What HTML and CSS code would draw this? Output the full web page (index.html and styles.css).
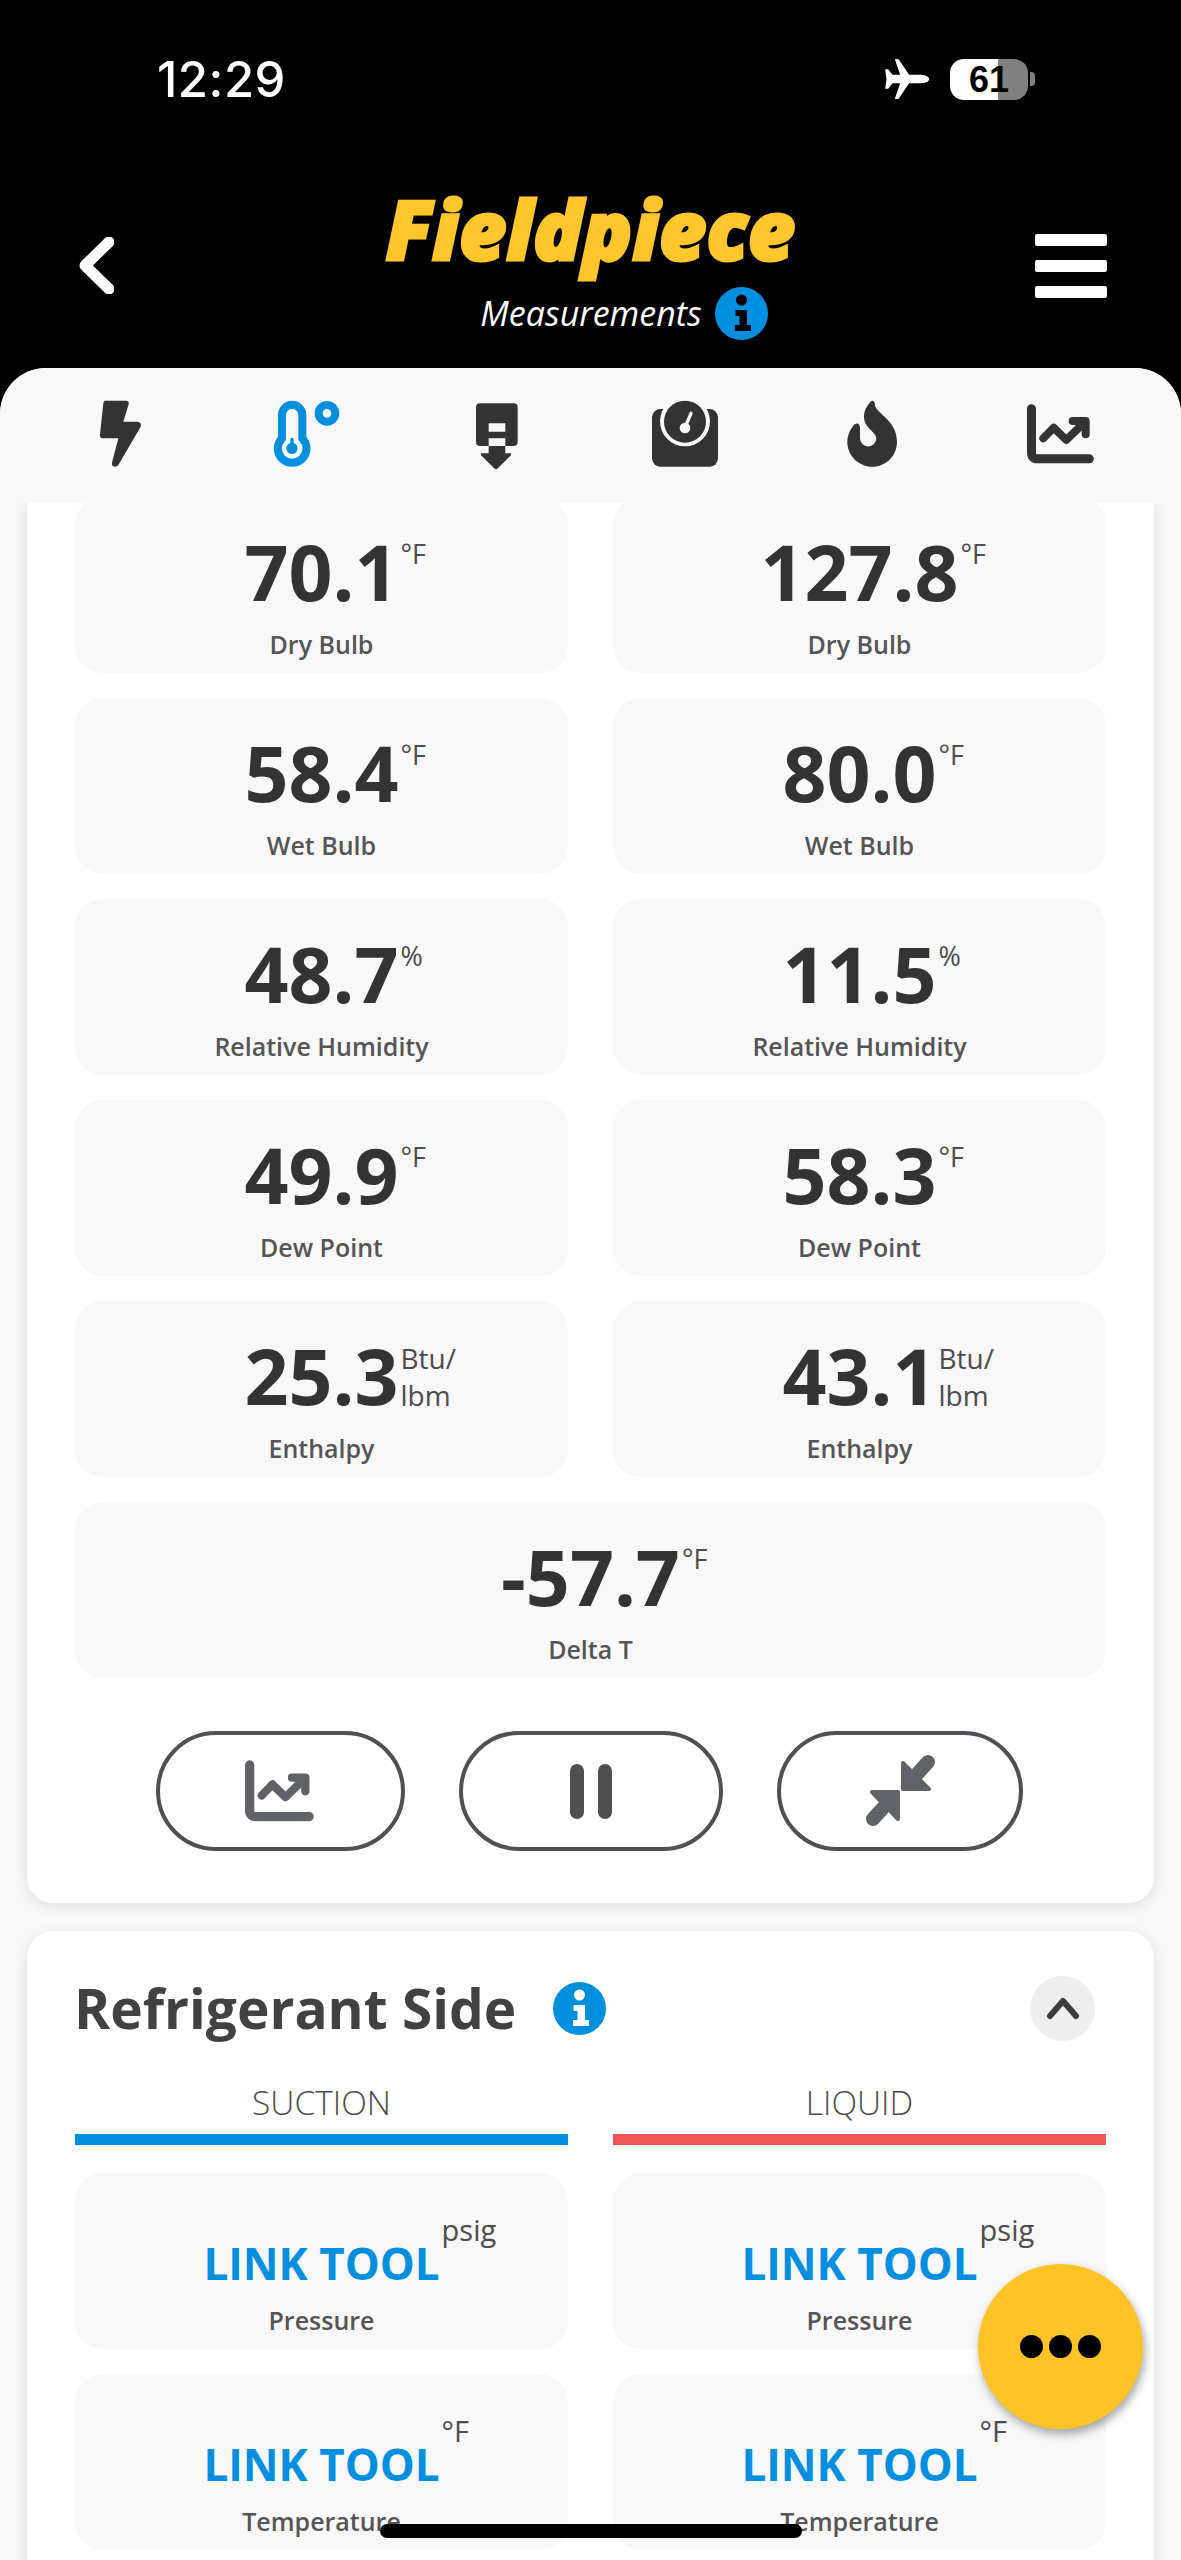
FILE: index.html
```html
<!DOCTYPE html>
<html lang="en">
<head>
<meta charset="utf-8">
<title>Fieldpiece Measurements</title>
<link rel="stylesheet" href="styles.css">
</head>
<body>
<svg class="defs" width="0" height="0" aria-hidden="true">
  <symbol id="chart" viewBox="1275 87 210 210">
    <path class="chart-axis" d="M1291.500 116V248Q1291.500 266.500 1310 266.500H1465"/>
    <path class="chart-line" d="M1327 205L1358 173L1396 210L1447 160"/>
    <path class="chart-line" d="M1415 153H1454V193"/>
  </symbol>
  <symbol id="info" viewBox="0 0 53 53">
    <path d="M26.500 7.500a5.500 5.500 0 1 1 0 11a5.500 5.500 0 0 1 0-11ZM20.500 23H32V38H36V44H20V38H24.500V29H20.500Z"/>
  </symbol>
</svg>
<div class="screen">
  <header class="top">
    <div class="status">
      <span class="time">12:29</span>
      <div class="status-icons">
        <svg class="plane" viewBox="130 58 140 126"><path d="M265 121Q265 110 240 108H205L175 64Q172 60 162 62L178 108H155L142 92H133L137 121L133 150H142L155 134H178L162 180Q172 182 175 178L205 134H240Q265 132 265 121Z"/></svg>
        <span class="battery">61</span>
        <span class="battery-tip"></span>
      </div>
    </div>
    <div class="nav">
      <svg class="back" viewBox="0 0 35 57"><path d="M30 5L6 28.500L30 52"/></svg>
      <div class="brand">
        <div class="logo">Fieldpiece</div>
        <div class="subtitle"><span>Measurements</span><svg class="info info-dark"><use href="#info"/></svg></div>
      </div>
      <div class="burger"><i></i><i></i><i></i></div>
    </div>
  </header>
  <main class="sheet">
    <nav class="tabs">
      <svg class="tab" viewBox="75 87 210 210"><path d="M135 92H198Q208 93 206 103L190 155H234Q246 158 242 170L175 285Q168 293 158 288Q154 284 156 278L175 205H128Q118 204 120 193L130 100Q131 93 135 92Z"/></svg>
      <svg class="tab tab-active" viewBox="645 87 210 210">
        <path class="thermo" d="M672 205V135A30.500 30.500 0 0 1 733 135V205A43 43 0 1 1 672 205Z"/>
        <path d="M702 203q5 0 5 5v11a17 17 0 1 1-10 0v-11q0-5 5-5Z"/>
        <circle class="thermo" cx="807" cy="130" r="25"/>
      </svg>
      <svg class="tab" viewBox="1200 87 210 210">
        <path fill-rule="evenodd" d="M1257 100H1358Q1370 100 1370 112V216Q1370 228 1358 228H1333V205H1283V228H1257Q1245 228 1245 216V112Q1245 100 1257 100ZM1283 160V185H1333V160Z"/>
        <path d="M1283 228H1333V250H1350V256L1305 300L1260 256V250H1283Z"/>
      </svg>
      <svg class="tab" viewBox="144 87 210 210">
        <rect x="150" y="117" width="198" height="173" rx="25"/>
        <circle class="tab-bg" cx="249" cy="154" r="75"/>
        <circle cx="249" cy="155" r="63"/>
        <path class="needle" d="M249 172L267 130"/>
        <circle class="tab-bg" cx="249" cy="174" r="16"/>
      </svg>
      <svg class="tab" viewBox="712 87 210 210"><path d="M812 93Q822 90 823 105C825 130 889 150 889 215C889 258 855 290 815 290C775 290 740 258 740 215C740 195 750 175 762 163Q775 155 778 172V205A24.500 24.500 0 0 0 827 205C827 185 790 175 790 140C790 120 800 105 812 93Z"/></svg>
      <svg class="tab"><use href="#chart"/></svg>
    </nav>
    <div class="content">
      <section class="card card-first">
        <div class="grid">
          <div class="tile"><div class="reading"><b>70.1</b><sup>°F</sup></div><span>Dry Bulb</span></div>
          <div class="tile"><div class="reading"><b>127.8</b><sup>°F</sup></div><span>Dry Bulb</span></div>
          <div class="tile"><div class="reading"><b>58.4</b><sup>°F</sup></div><span>Wet Bulb</span></div>
          <div class="tile"><div class="reading"><b>80.0</b><sup>°F</sup></div><span>Wet Bulb</span></div>
          <div class="tile"><div class="reading"><b>48.7</b><sup>%</sup></div><span>Relative Humidity</span></div>
          <div class="tile"><div class="reading"><b>11.5</b><sup>%</sup></div><span>Relative Humidity</span></div>
          <div class="tile"><div class="reading"><b>49.9</b><sup>°F</sup></div><span>Dew Point</span></div>
          <div class="tile"><div class="reading"><b>58.3</b><sup>°F</sup></div><span>Dew Point</span></div>
          <div class="tile"><div class="reading"><b>25.3</b><sup class="two-line">Btu/<br>lbm</sup></div><span>Enthalpy</span></div>
          <div class="tile"><div class="reading"><b>43.1</b><sup class="two-line">Btu/<br>lbm</sup></div><span>Enthalpy</span></div>
          <div class="tile tile-wide"><div class="reading"><b>-57.7</b><sup>°F</sup></div><span>Delta T</span></div>
        </div>
        <div class="actions">
          <button class="pill pill-chart" type="button"><svg class="tab pill-icon"><use href="#chart"/></svg></button>
          <button class="pill pill-pause" type="button"><i></i><i></i></button>
          <button class="pill pill-collapse" type="button">
            <svg class="collapse" viewBox="860 1752 80 80">
              <path d="M903 1764V1790H929Z"/><path class="arrow-line" d="M908 1785L928 1763"/>
              <path d="M898 1820V1793H872Z"/><path class="arrow-line" d="M893 1798L873 1820"/>
            </svg>
          </button>
        </div>
      </section>
      <section class="card card-second">
        <div class="card-head">
          <h2>Refrigerant Side</h2>
          <svg class="info info-light"><use href="#info"/></svg>
          <span class="toggle"><svg viewBox="0 0 36 26"><path d="M5 21L18 6L31 21"/></svg></span>
        </div>
        <div class="columns">
          <div class="column column-suction">SUCTION</div>
          <div class="column column-liquid">LIQUID</div>
        </div>
        <div class="grid">
          <div class="tile tile-link"><div class="reading"><em>LINK TOOL</em><sup>psig</sup></div><span>Pressure</span></div>
          <div class="tile tile-link"><div class="reading"><em>LINK TOOL</em><sup>psig</sup></div><span>Pressure</span></div>
          <div class="tile tile-link"><div class="reading"><em>LINK TOOL</em><sup>°F</sup></div><span>Temperature</span></div>
          <div class="tile tile-link"><div class="reading"><em>LINK TOOL</em><sup>°F</sup></div><span>Temperature</span></div>
        </div>
      </section>
    </div>
  </main>
  <button class="fab" type="button"><i></i><i></i><i></i></button>
  <div class="home"></div>
</div>
</body>
</html>
```
FILE: styles.css
```css
* { box-sizing: border-box; }
html, body { margin: 0; padding: 0; background: #000; }
body { font-family: "Open Sans", "Noto Sans", sans-serif; color: #3b3b3b; }
.defs { position: absolute; }
.screen { position: relative; width: 1181px; height: 2560px; overflow: hidden; background: #000; display: flex; flex-direction: column; }

.top { height: 368px; flex: none; background: #000; color: #fff; }
.status { height: 158px; display: flex; justify-content: space-between; align-items: flex-start; padding: 53px 146px 0 157px; }
.time { font: 500 49px/54px Inter, "Liberation Sans", sans-serif; letter-spacing: .5px; }
.status-icons { display: flex; align-items: center; padding-top: 5px; }
.plane { width: 47px; height: 42px; fill: #fff; margin-right: 19px; }
.battery { width: 78px; height: 41px; border-radius: 14px; background: linear-gradient(90deg, #fff 61.500%, #808080 61.500%); color: #000; font: 700 36px/41px "Liberation Sans", sans-serif; text-align: center; }
.battery-tip { width: 5px; height: 14px; margin-left: 2px; background: #808080; border-radius: 0 4px 4px 0; }

.nav { display: flex; justify-content: space-between; align-items: flex-start; padding: 0 74px 0 79px; }
.back { width: 35px; height: 57px; margin-top: 79px; fill: none; stroke: #fff; stroke-width: 11; stroke-linecap: round; stroke-linejoin: round; }
.brand { display: flex; flex-direction: column; align-items: center; margin-left: 32px; }
.logo { font: italic 800 82px/84px "Open Sans", sans-serif; color: #ffc72c; -webkit-text-stroke: 3px #ffc72c; margin-top: 28px; }
.subtitle { display: flex; align-items: center; gap: 13px; margin-top: 17px; margin-left: 67px; font: italic 400 34px/53px "Open Sans", sans-serif; color: #fff; }
.info { width: 53px; height: 53px; border-radius: 50%; background: #008fdf; flex: none; }
.info-dark { fill: #000; }
.info-light { fill: #fff; }
.burger { display: flex; flex-direction: column; gap: 14px; margin-top: 76px; }
.burger i { display: block; width: 72px; height: 12px; background: #fff; border-radius: 2px; }

.sheet { flex: 1; min-height: 0; background: #f8f8f8; border-radius: 46px 46px 0 0; display: flex; flex-direction: column; }
.tabs { position: relative; z-index: 1; flex: none; height: 135px; padding: 31px 26px 0; background: #f8f8f8; border-radius: 46px 46px 0 0; display: grid; grid-template-columns: repeat(6, 1fr); justify-items: center; align-items: start; }
.tab { width: 70px; height: 70px; fill: #333; color: #333; }
.tab-active { fill: #008fdf; }
.tab-bg { fill: #f8f8f8; }
.thermo { fill: none; stroke: #008fdf; stroke-width: 24; }
.needle { fill: none; stroke: #f8f8f8; stroke-width: 10; stroke-linecap: round; }
.chart-line { fill: none; stroke: currentColor; stroke-width: 24; stroke-linecap: round; stroke-linejoin: round; }
.chart-axis { fill: none; stroke: currentColor; stroke-width: 27; stroke-linecap: round; stroke-linejoin: round; }

.content { flex: 1; min-height: 0; overflow: hidden; padding: 0 27px; }
.card { background: #fff; border-radius: 26px; padding: 0 47px 0 48px; box-shadow: 0 3px 14px rgba(0, 0, 0, .1); }
.card-first { margin-top: -6px; padding-bottom: 52px; border-radius: 0 0 26px 26px; }
.card-second { margin-top: 28px; padding-bottom: 60px; }

.grid { display: grid; grid-template-columns: 493px 493px; column-gap: 45px; row-gap: 25px; }
.tile { height: 176px; background: #f8f8f8; border-radius: 28px; display: flex; flex-direction: column; align-items: center; padding-top: 32px; }
.tile-wide { grid-column: 1 / -1; }
.reading { position: relative; height: 86px; line-height: 86px; white-space: nowrap; }
.reading b { font-size: 77px; font-weight: 700; color: #333; }
.reading sup { position: absolute; left: 100%; top: 9px; margin-left: 2px; font-size: 27px; line-height: 32px; font-weight: 400; color: #4c4c4c; }
.reading sup.two-line { top: 7px; line-height: 37px; font-size: 28px; }
.tile span { margin-top: 13px; font-size: 25px; line-height: 32px; font-weight: 600; color: #555; }

.actions { display: flex; justify-content: center; gap: 54px; margin-top: 53px; padding-right: 4px; }
.pill { height: 120px; border: 4px solid #4f5053; border-radius: 60px; background: #fff; padding: 0; display: flex; align-items: center; justify-content: center; }
.pill-chart { width: 249px; }
.pill-pause { width: 264px; gap: 14px; }
.pill-collapse { width: 246px; }
.pill-icon { width: 72px; height: 72px; color: #5f6266; fill: #5f6266; }
.pill-pause i { display: block; width: 14px; height: 55px; border-radius: 7px; background: #4e4f53; }
.collapse { width: 80px; height: 80px; fill: #5f6266; stroke: #5f6266; stroke-width: 4; stroke-linejoin: round; }
.arrow-line { fill: none; stroke-width: 14; stroke-linecap: round; }

.card-head { height: 154px; display: flex; align-items: center; }
.card-head h2 { margin: 0 0 0 -1px; font-size: 55px; line-height: 74px; font-weight: 700; color: #414141; }
.card-head .info { margin-left: 37px; }
.toggle { margin-left: auto; margin-right: 12px; width: 65px; height: 65px; border-radius: 50%; background: #eee; display: flex; align-items: center; justify-content: center; }
.toggle svg { width: 36px; height: 26px; fill: none; stroke: #3c3c3c; stroke-width: 6; stroke-linecap: round; stroke-linejoin: round; }

.columns { display: grid; grid-template-columns: 493px 493px; column-gap: 45px; margin-top: -6px; margin-bottom: 28px; }
.column { height: 66px; padding-top: 1px; text-align: center; font-size: 33.500px; line-height: 44px; font-weight: 300; color: #4c4c4c; border-bottom: 11px solid; }
.column-suction { border-color: #008fdf; }
.column-liquid { border-color: #ee5555; }

.tile-link em { font-style: normal; font-size: 44px; font-weight: 700; color: #008fdf; }
.tile-link .reading { top: 15px; }
.tile-link .reading sup { top: -9px; font-size: 29px; line-height: 38px; }

.fab { position: absolute; left: 978px; top: 2264px; width: 165px; height: 165px; border: 0; border-radius: 50%; background: #ffc326; box-shadow: 2px 5px 10px rgba(0, 0, 0, .35); display: flex; align-items: center; justify-content: center; gap: 6px; padding: 0; }
.fab i { display: block; width: 23px; height: 23px; border-radius: 50%; background: #000; }
.home { position: absolute; left: 380px; top: 2524px; width: 422px; height: 14px; border-radius: 7px; background: #000; }
```
